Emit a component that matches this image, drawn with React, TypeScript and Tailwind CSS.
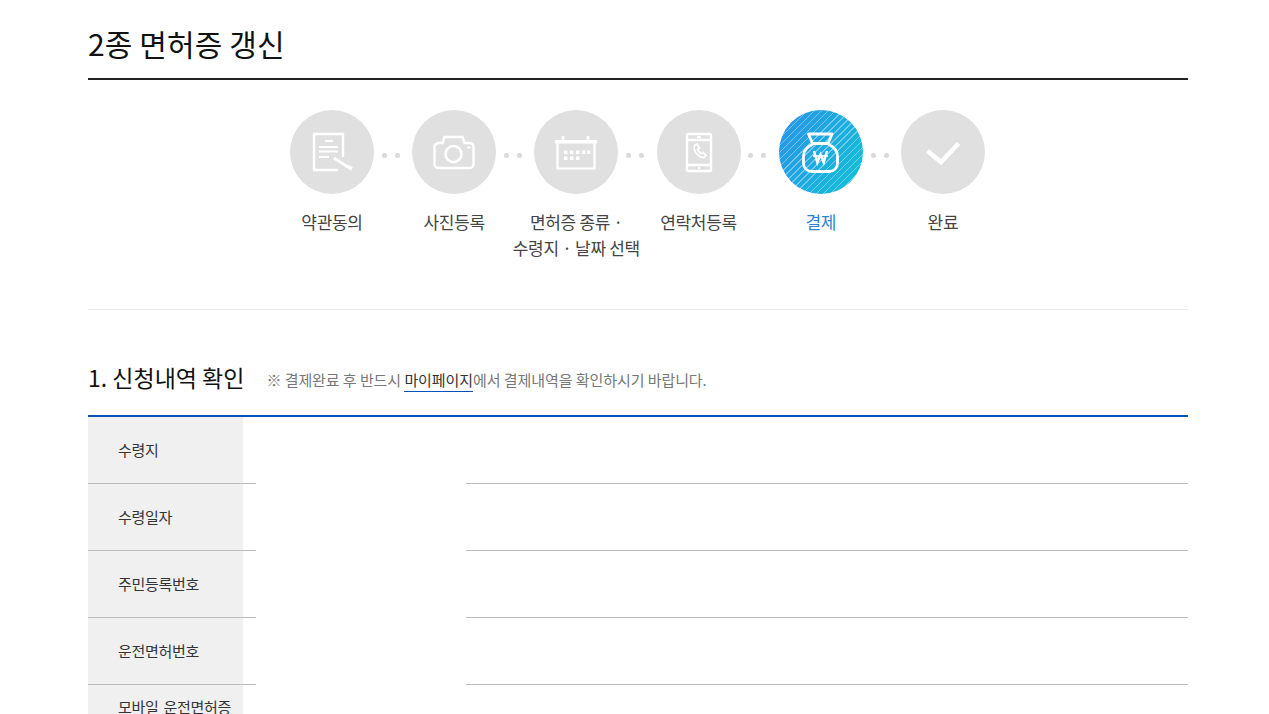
const FONT = "font-['Noto_Sans_CJK_KR','Noto_Sans',sans-serif]";

function DocIcon() {
  return (
    <svg width="44" height="44" viewBox="0 0 44 44" fill="none" stroke="#fff" strokeWidth="2.400">
      <path d="M33 27V4H4v36h24" />
      <path d="M15 11h8M9 17h19M9 21.500h19M9 27h10" strokeWidth="2.200" />
      <path d="M24 28l14 9" strokeWidth="2.800" />
      <path d="M37 36l5 3" strokeWidth="3.600" />
    </svg>
  );
}

function CameraIcon() {
  return (
    <svg width="44" height="44" viewBox="0 0 44 44" fill="none" stroke="#fff" strokeWidth="2.400">
      <path d="M2.500 17a4 4 0 0 1 4-4h4l2-6h18l2 6h5a4 4 0 0 1 4 4v17a4 4 0 0 1-4 4h-31a4 4 0 0 1-4-4z" />
      <circle cx="21.500" cy="24" r="8" strokeWidth="2.600" />
      <path d="M35 17.500h3.500" strokeWidth="2" />
    </svg>
  );
}

function CalendarIcon() {
  return (
    <svg width="44" height="44" viewBox="0 0 44 44" fill="none" stroke="#fff" strokeWidth="2.200">
      <path d="M1 10h42v3.500H1z" fill="#fff" stroke="none" />
      <path d="M9 6v6M34 6v6" strokeWidth="2.600" />
      <path d="M3.500 12v26.500h37V12" />
      <path
        d="M10 20.500h3.400v3.400h-3.400zM16 20.500h3.400v3.400h-3.400zM22 20.500h3.400v3.400h-3.400zM28 20.500h3.400v3.400h-3.400zM33 20.500h3.400v3.400h-3.400zM10 26.500h3.400v3.400h-3.400zM16 26.500h3.400v3.400h-3.400zM22 26.500h3.400v3.400h-3.400z"
        fill="#fff"
        stroke="none"
      />
    </svg>
  );
}

function PhoneIcon() {
  return (
    <svg width="44" height="44" viewBox="0 0 44 44" fill="none" stroke="#fff" strokeWidth="2.400">
      <rect x="10" y="4" width="24" height="37" rx="1.500" />
      <path d="M10 10h24M10 35h24" />
      <path d="M20 7h4M21 38h2" strokeWidth="1.800" />
      <path d="M17.500 15.500l2.500-1.500 2.500 4-1.800 1.500c.6 1.800 1.800 3.300 3.500 4.200l1.800-1.300 3 3-2.300 2.300c-5.400-.5-10.700-6.700-9.200-12.200z" strokeWidth="1.700" />
    </svg>
  );
}

function BagIcon() {
  return (
    <svg width="44" height="44" viewBox="0 0 44 44" fill="none" stroke="#fff" strokeWidth="2.800">
      <path d="M9.500 4h23.500l-4 9.500H13.500z" strokeLinejoin="round" />
      <path d="M14 14c-6 3-9.500 6-9.500 12v7c0 5 3.500 8.500 8.500 8.500h17c5 0 8.500-3.500 8.500-8.500v-7c0-6-3.500-9-9.500-12" strokeLinejoin="round" />
      <path d="M15 21l3.300 11.500 3.200-8 3.200 8L28 21" strokeWidth="2.400" />
      <path d="M14 26h15" strokeWidth="1.600" />
    </svg>
  );
}

function CheckIcon() {
  return (
    <svg width="44" height="44" viewBox="0 0 44 44" fill="none" stroke="#fff" strokeWidth="4.600">
      <path d="M6.500 21L20 32 37.500 13.500" />
    </svg>
  );
}

const STEPS = [
  { label: ["약관동의"], icon: <DocIcon /> },
  { label: ["사진등록"], icon: <CameraIcon /> },
  { label: ["면허증 종류 ·", "수령지 · 날짜 선택"], icon: <CalendarIcon /> },
  { label: ["연락처등록"], icon: <PhoneIcon /> },
  { label: ["결제"], icon: <BagIcon />, active: true },
  { label: ["완료"], icon: <CheckIcon /> },
];

const ROWS = [
  { label: "수령지", height: "h-[67px]" },
  { label: "수령일자", height: "h-[67px]" },
  { label: "주민등록번호", height: "h-[67px]" },
  { label: "운전면허번호", height: "h-[67px]" },
  { label: "모바일 운전면허증", height: "h-[45px]" },
];

function Dots() {
  return (
    <div className="absolute left-[111px] top-[43px] flex gap-[8px]">
      <span className="h-[5px] w-[5px] rounded-full bg-[#d9d9d9]" />
      <span className="h-[5px] w-[5px] rounded-full bg-[#d9d9d9]" />
    </div>
  );
}

export default function App() {
  return (
    <div className={`${FONT} h-[714px] overflow-hidden bg-white`}>
      <div className="ml-[88px] w-[1100px]">
        <h1 className="h-[80px] border-b-2 border-[#222] pt-[21px] text-[30px] leading-[44px] font-normal tracking-[0.1px] text-[#111]">
          2종 면허증 갱신
        </h1>

        <ol className="flex h-[230px] border-b border-[#eaeaea] pt-[30px] pl-[182.900px]">
          {STEPS.map((step, i) => (
            <li key={step.label[0]} className="relative flex w-[122.200px] flex-col items-center">
              <div
                className={`flex h-[84px] w-[84px] items-center justify-center rounded-full ${
                  step.active
                    ? "bg-[repeating-linear-gradient(135deg,rgba(255,255,255,0.38)_0px,rgba(255,255,255,0.38)_1px,transparent_1px,transparent_5px),linear-gradient(120deg,#2a92ea,#12c2d6)]"
                    : "bg-[#e0e0e0]"
                }`}
              >
                {step.icon}
              </div>
              {i < STEPS.length - 1 && <Dots />}
              <p
                className={`mt-[15px] text-center text-[17px] leading-[26px] tracking-[-0.3px] whitespace-nowrap ${
                  step.active ? "text-[#2a83d8]" : "text-[#444]"
                }`}
              >
                {step.label.map((line) => (
                  <span key={line} className="block">
                    {line}
                  </span>
                ))}
              </p>
            </li>
          ))}
        </ol>

        <div className="flex h-[107px] items-end border-b-2 border-[#0b4fb8] pb-[22px]">
          <h2 className="text-[23px] leading-[32px] font-normal text-[#111]">1. 신청내역 확인</h2>
          <p className="ml-[22px] pb-[1px] text-[15px] leading-[24px] tracking-[-0.07px] text-[#777]">
            ※ 결제완료 후 반드시{" "}
            <span className="border-b border-[#0b4fb8] pb-[1px] text-[#333]">마이페이지</span>
            에서 결제내역을 확인하시기 바랍니다.
          </p>
        </div>

        {ROWS.map((row) => (
          <div key={row.label} className={`flex ${row.height}`}>
            <div className="flex w-[155px] items-center border-b border-[#bbb] bg-[#f0f0f0] pl-[30px] text-[15px] tracking-[-0.3px] [word-spacing:2px] whitespace-nowrap text-[#333]">
              {row.label}
            </div>
            <div className="w-[13px] border-b border-[#bbb]" />
            <div className="w-[210px]" />
            <div className="flex-1 border-b border-[#bbb]" />
          </div>
        ))}
      </div>
    </div>
  );
}
